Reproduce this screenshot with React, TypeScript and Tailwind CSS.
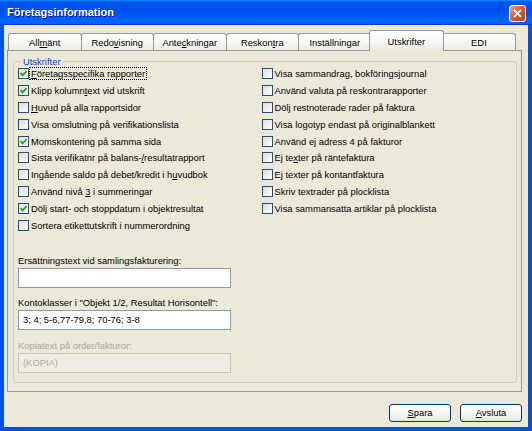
import type { ReactNode } from 'react'

const FONT = "font-['Liberation_Sans',Arial,sans-serif]"

const tabs: Array<{ key: string; label: ReactNode }> = [
  { key: 'allmant',  label: <>All<u>m</u>änt</> },
  { key: 'redov',    label: <>Redo<u>v</u>isning</> },
  { key: 'antec',    label: <>Ante<u>c</u>kningar</> },
  { key: 'reskontra', label: <>Reskon<u>t</u>ra</> },
  { key: 'install',  label: <>Inställningar</> },
  { key: 'utskr',    label: <>Utskrifter</> },
  { key: 'edi',      label: <>EDI</> },
]

const leftChecks: Array<{ label: ReactNode; checked?: boolean; focus?: boolean }> = [
  { label: <><u>F</u>öretagsspecifika rapporter</>, checked: true, focus: true },
  { label: <>Klipp kolumn<u>t</u>ext vid utskrift</>, checked: true },
  { label: <><u>H</u>uvud på alla rapportsidor</> },
  { label: <>Visa omslutning på verifikationslista</> },
  { label: <>Momskontering på samma sida</>, checked: true },
  { label: <>Sista verifikatnr på balans-<u>/</u>resultatrapport</> },
  { label: <>Ingående saldo på debet/kredit i h<u>u</u>vudbok</> },
  { label: <>Använd nivå <u>3</u> i summeringar</> },
  { label: <>Dölj start- och stoppdatum i objektresultat</>, checked: true },
  { label: <>Sortera etikettutskrift i nummerordning</> },
]

const rightChecks: Array<{ label: ReactNode; checked?: boolean }> = [
  { label: <>Visa sammandrag, bokföringsjournal</> },
  { label: <>Använd valuta på reskontrarapporter</> },
  { label: <>Dölj restnoterade rader på faktura</> },
  { label: <>Visa lo<u>g</u>otyp endast på originalblankett</> },
  { label: <>Använd ej adress 4 på fakturor</> },
  { label: <>Ej te<u>x</u>ter på räntefaktura</> },
  { label: <>Ej texter på kontantfaktura</> },
  { label: <>Skriv textrader på plocklista</> },
  { label: <>Visa sammansatta artiklar på plocklista</> },
]

function CheckRow({ label, checked, focus }: { label: ReactNode; checked?: boolean; focus?: boolean }) {
  return (
    <div className="flex h-[16.8px] items-center">
      <span className="flex h-[11px] w-[11px] shrink-0 items-center justify-center border border-[#1C5180] bg-[linear-gradient(135deg,#DCDCD7,#FFFFFF)]">
        {checked && (
          <svg width="9" height="9" viewBox="0 0 9 9">
            <path d="M1.5 4.2 L3.6 6.4 L7.6 2.2" fill="none" stroke="#21A121" strokeWidth="1.8" />
          </svg>
        )}
      </span>
      <span
        className={`ml-[1px] px-[1px] leading-[11px] whitespace-nowrap ${
          focus ? 'outline-1 outline-dotted outline-black' : ''
        }`}
      >
        {label}
      </span>
    </div>
  )
}

export default function App() {
  return (
    <div className={`${FONT} flex h-[431px] w-[532px] flex-col bg-[#0B4FDD] text-[9.4px] text-black`}>
      {/* Title bar */}
      <div className="flex h-[25px] shrink-0 items-center justify-between bg-[linear-gradient(180deg,#0997ff,#0053ee_8%,#0050ee_40%,#06f_88%,#06f_93%,#005bff_95%,#003dd7_96%,#003dd7)] pl-[7px] pr-[6px]">
        <span className="text-[11px] font-bold text-white [text-shadow:1px_1px_#0F1089]">Företagsinformation</span>
        <div className="mt-[2px] flex h-[17px] w-[17px] items-center justify-center rounded-[3px] border border-white bg-[linear-gradient(135deg,#F4A58A,#E2582F_45%,#C8421C)]">
          <svg width="9" height="9" viewBox="0 0 9 9">
            <path d="M1 1 L8 8 M8 1 L1 8" stroke="white" strokeWidth="1.8" />
          </svg>
        </div>
      </div>

      {/* Body */}
      <div className="mx-[4px] mb-[4px] flex flex-1 flex-col bg-[#ECE9D8] pl-[3px]">
        {/* Tabs */}
        <div className="mt-[6px] flex h-[19px] items-end pl-[1px]">
          {tabs.map(t =>
            t.key === 'utskr' ? (
              <div
                key={t.key}
                className="relative z-10 -mx-[2px] -mb-px flex h-[21px] w-[75.7px] items-start justify-center rounded-t-[3px] border border-b-0 border-[#919B9C] bg-[linear-gradient(180deg,#FFFFFF,#F7F6F2_60%,#ECE9D8)] pt-[5px] leading-[11px]"
              >
                {t.label}
              </div>
            ) : (
              <div
                key={t.key}
                className="-mr-px flex h-[17px] w-[73.5px] items-center justify-center rounded-t-[3px] border border-b-0 border-[#919B9C] bg-[linear-gradient(180deg,#FFFFFF,#F4F3EE_70%,#ECEBE5)] leading-[11px]"
              >
                {t.label}
              </div>
            )
          )}
        </div>

        {/* Panel */}
        <div className="h-[342px] w-[515px] border border-[#919B9C] bg-[#ECE9D8] pl-[5px] pr-[4px] pt-[5px]">
          <fieldset className="h-[327px] rounded-[3px] border border-[#D0D0BF] pl-[4px]">
            <legend className="ml-[3px] px-[2px] leading-[11px] text-[#0046D5]">Utskrifter</legend>

            <div className="-mt-[1.5px] grid grid-cols-[243.5px_1fr]">
              <div className="flex flex-col">
                {leftChecks.map((c, i) => (
                  <CheckRow key={i} label={c.label} checked={c.checked} focus={c.focus} />
                ))}
              </div>
              <div className="flex flex-col">
                {rightChecks.map((c, i) => (
                  <CheckRow key={i} label={c.label} checked={c.checked} />
                ))}
              </div>
            </div>

            <div className="mt-[21.5px] flex flex-col">
              <span className="leading-[11px]">Ersättningstext vid samlingsfakturering:</span>
              <div className="mt-[2.5px] h-[19.5px] w-[213px] border border-[#7F9DB9] bg-white" />

              <span className="mt-[9px] leading-[11px]">Kontoklasser i "Objekt 1/2, Resultat Horisontell":</span>
              <div className="mt-[2.5px] flex h-[19.5px] w-[213px] items-center border border-[#7F9DB9] bg-white pl-[4px]">
                3; 4; 5-6,77-79,8; 70-76; 3-8
              </div>

              <span className="mt-[10px] leading-[11px] text-[#ACA899]">Kopiatext på order/fakturor:</span>
              <div className="mt-[2.5px] flex h-[19.5px] w-[213px] items-center border border-[#C9C7BA] bg-[#EFEDE3] pl-[4px] text-[#ACA899]">
                (KOPIA)
              </div>
            </div>
          </fieldset>
        </div>

        {/* Buttons */}
        <div className="mt-[11.5px] flex w-[515px] justify-end gap-[9px]">
          <button className="h-[18.5px] w-[62px] rounded-[3px] border border-[#003C74] bg-[linear-gradient(180deg,#FFFFFF,#F3F2EE_70%,#E3E0D6)] leading-[11px]">
            <u>S</u>para
          </button>
          <button className="h-[18.5px] w-[62px] rounded-[3px] border border-[#003C74] bg-[linear-gradient(180deg,#FFFFFF,#F3F2EE_70%,#E3E0D6)] leading-[11px]">
            <u>A</u>vsluta
          </button>
        </div>
      </div>
    </div>
  )
}
